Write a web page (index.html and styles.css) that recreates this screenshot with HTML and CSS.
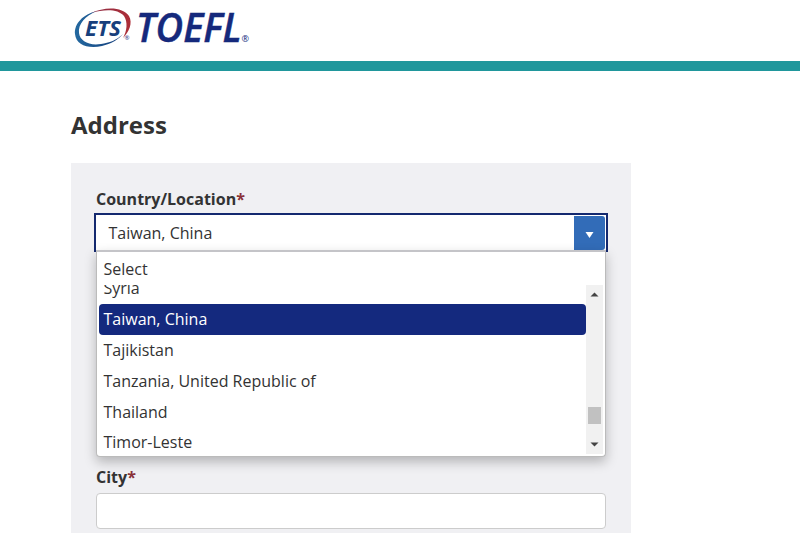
FILE: index.html
```html
<!DOCTYPE html>
<html lang="en">
<head>
    <meta charset="UTF-8">
    <meta name="viewport" content="width=device-width, initial-scale=1.0">
    <title>Address</title>
    <link rel="stylesheet" href="styles.css">
</head>
<body>
    <header class="header">
        <svg class="logo" width="190" height="50" viewBox="0 0 190 50">
            <defs>
                <linearGradient id="blue" x1="0" y1="0" x2="1" y2="0">
                    <stop offset="0" stop-color="#2469a0"/>
                    <stop offset="1" stop-color="#123a78"/>
                </linearGradient>
                <linearGradient id="red" x1="0" y1="0" x2="1" y2="0">
                    <stop offset="0" stop-color="#8e2c45"/>
                    <stop offset="1" stop-color="#ad2f38"/>
                </linearGradient>
            </defs>
            <path fill="url(#blue)" d="M26 7 C12 10 3 20 4 30 C5 41 17 45 31 42 C40 40 48 35 52 30 C46 36 38 39 30 40 C18 42 9 37 8 29 C7 20 14 12 26 7 Z"/>
            <path fill="url(#red)" d="M20 9 C35 2 52 3 58 12 C62 19 58 28 52 34 C56 27 57 18 53 12 C47 5 34 5 20 9 Z"/>
            <text class="logo-ets" x="14" y="31.500" textLength="36" lengthAdjust="spacingAndGlyphs">ETS</text>
            <text class="logo-reg" x="53.500" y="36" font-size="6">®</text>
            <text class="logo-toefl" x="65" y="38" textLength="105.500" lengthAdjust="spacingAndGlyphs">TOEFL</text>
            <text class="logo-reg" x="170.500" y="38" font-size="9">®</text>
        </svg>
    </header>

    <main class="content">
        <h1>Address</h1>
        <form class="panel">
            <label class="label">Country/Location<span class="required">*</span></label>
            <div class="select">
                <div class="select-box">
                    <span class="select-value">Taiwan, China</span>
                    <span class="select-button">
                        <svg width="10" height="8" viewBox="0 0 10 8"><path fill="#fff" d="M0.500 1h8L4.500 7z"/></svg>
                    </span>
                </div>
                <div class="dropdown">
                    <div class="placeholder">Select</div>
                    <div class="list">
                        <ul class="options">
                            <li>Syria</li>
                            <li class="active">Taiwan, China</li>
                            <li>Tajikistan</li>
                            <li>Tanzania, United Republic of</li>
                            <li>Thailand</li>
                            <li>Timor-Leste</li>
                        </ul>
                        <div class="scrollbar">
                            <svg width="9" height="5" viewBox="0 0 9 5"><path fill="#444" d="M0.500 4.500h8L4.500 0.500z"/></svg>
                            <span class="thumb"></span>
                            <svg width="9" height="5" viewBox="0 0 9 5"><path fill="#444" d="M0.500 0.500h8L4.500 4.500z"/></svg>
                        </div>
                    </div>
                </div>
            </div>
            <label class="label" for="city">City<span class="required">*</span></label>
            <input class="input" type="text" id="city">
        </form>
    </main>
</body>
</html>
```

FILE: styles.css
```css
* {
    box-sizing: border-box;
}

body {
    margin: 0;
    height: 100vh;
    overflow: hidden;
    display: flex;
    flex-direction: column;
    background: #fff;
    color: #333;
    font-family: "Open Sans", "Noto Sans", sans-serif;
    font-size: 16px;
}

/* Header */
.header {
    height: 71px;
    padding: 4px 0 0 71px;
    border-bottom: 10px solid #20979c;
}

.logo {
    display: block;
}

.logo-ets {
    font-size: 22px;
    font-weight: 700;
    font-style: italic;
    fill: #173f7c;
}

.logo-toefl {
    font-size: 39px;
    font-weight: 600;
    font-style: italic;
    fill: #15297c;
    stroke: #15297c;
    stroke-width: 0.5px;
}

.logo-reg {
    fill: #15297c;
}

/* Content */
.content {
    flex: 1;
    display: flex;
    flex-direction: column;
    width: 560px;
    margin-left: 71px;
}

h1 {
    margin: 0;
    padding-top: 37px;
    height: 92px;
    font-size: 24px;
    line-height: 34px;
    font-weight: 700;
}

.panel {
    flex: 1;
    padding: 25px 25px 0;
    background: #f0f0f3;
}

.label {
    display: block;
    line-height: 22px;
    font-weight: 700;
}

.required {
    color: #8a3238;
}

/* Select */
.select {
    position: relative;
    height: 253px;
    margin: 3px -2px 0;
}

.select-box {
    display: flex;
    height: 39px;
    padding: 1px 1px 1px 0;
    border: 2px solid #14296f;
    border-bottom: 0;
    background: #fff;
}

.select-value {
    flex: 1;
    padding-left: 12.5px;
    line-height: 35px;
}

.select-button {
    display: flex;
    align-items: center;
    justify-content: center;
    width: 31px;
    height: 34px;
    padding-top: 4px;
    border-radius: 0 3px 3px 0;
    background: #326cb8;
}

.dropdown {
    position: absolute;
    top: 37px;
    left: 2px;
    width: 510px;
    height: 207px;
    padding: 6px 2px 0;
    border: 1px solid #bbb;
    border-top: 2px solid #c4c4c8;
    border-radius: 0 0 4px 4px;
    background: #fff;
    box-shadow: 0 5px 12px rgba(0, 0, 0, 0.25);
}

.placeholder {
    height: 27px;
    padding-left: 4.5px;
    line-height: 22px;
}

.list {
    display: flex;
    height: 169px;
    overflow: hidden;
}

.options {
    flex: 1;
    margin: -12px 0 0;
    padding: 0;
    list-style: none;
}

.options li {
    height: 31px;
    padding-left: 4.5px;
    line-height: 30px;
}

.options li:last-child {
    line-height: 28px;
}

.options .active {
    border-radius: 4px;
    background: #14297e;
    color: #fff;
}

.scrollbar {
    display: flex;
    flex-direction: column;
    align-items: center;
    width: 17px;
    padding: 7px 0;
    background: #f1f1f1;
}

.thumb {
    width: 13px;
    height: 17px;
    margin: auto 0 18px;
    background: #c1c1c1;
}

/* Input */
.input {
    display: block;
    width: 510px;
    height: 36px;
    margin-top: 5px;
    padding: 6px 12px;
    border: 1px solid #ccc;
    border-radius: 4px;
    background: #fff;
    font: inherit;
}
```
